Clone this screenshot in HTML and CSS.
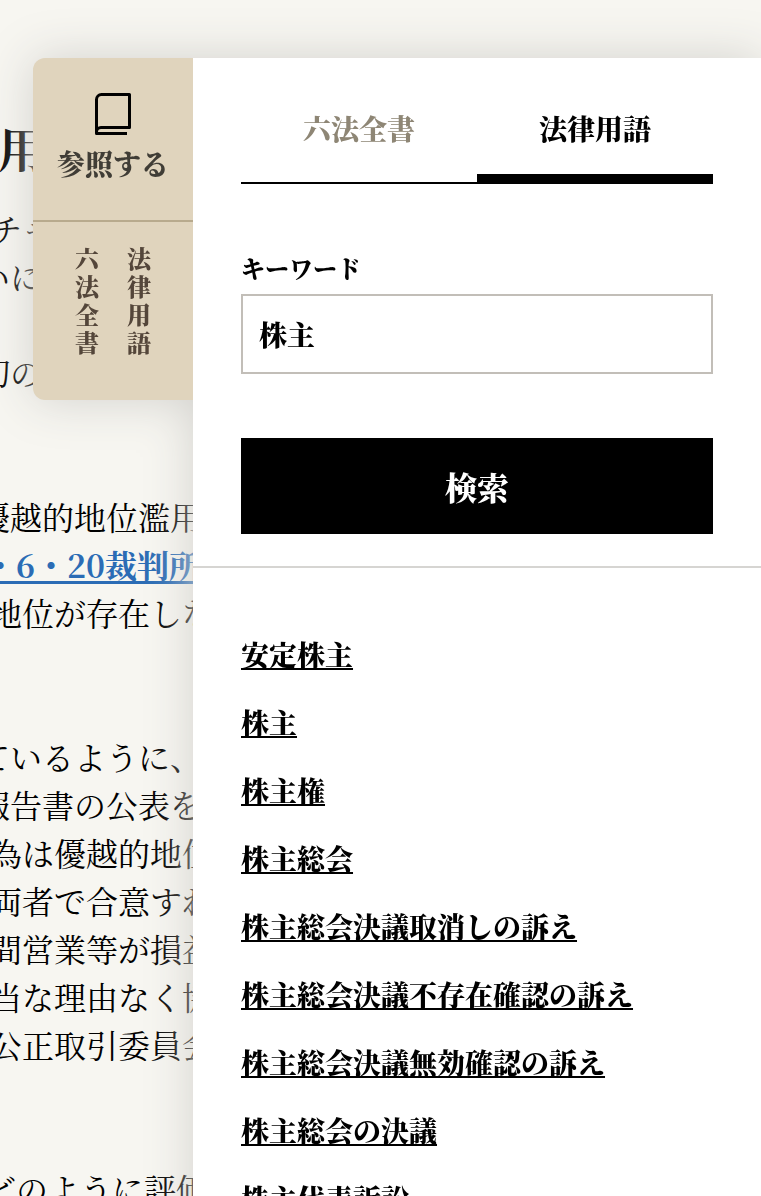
FILE: index.html
```
<!DOCTYPE html>
<html lang="ja">
<head>
  <meta charset="UTF-8">
  <meta name="viewport" content="width=device-width, initial-scale=1.0">
  <title>法律用語</title>
  <link rel="stylesheet" href="styles.css">
</head>
<body>
  <main class="article">
    <h1>用</h1>
    <p>
      <span class="line">チャ</span>
      <span class="line line-wide">いに</span>
    </p>
    <p>
      <span class="line line-wide">切の</span>
    </p>
    <p class="section">
      <span class="line line-wide">優越的地位濫用</span>
      <span class="line line-half"><a href="#case">・6・20裁判所</a></span>
      <span class="line">地位が存在しな</span>
    </p>
    <p class="section">
      <span class="line line-wide">ているように、</span>
      <span class="line line-wide">報告書の公表を</span>
      <span class="line">為は優越的地位</span>
      <span class="line">両者で合意すれ</span>
      <span class="line">間営業等が損益</span>
      <span class="line">当な理由なく協</span>
      <span class="line">公正取引委員会</span>
    </p>
    <p class="section">
      <span class="line line-half">どのように評価</span>
    </p>
  </main>

  <aside class="drawer">
    <div class="handle">
      <button type="button" class="handle-main">
        <svg class="book" viewBox="0 0 36 42" width="36" height="42" fill="none" stroke="#000" stroke-width="3" stroke-linejoin="round" aria-hidden="true">
          <path d="M32 40.500H1.500V6.500a5 5 0 0 1 5-5H34.500V34.500H6a4.500 4.500 0 0 0-4.500 4.500"/>
        </svg>
        <span>参照する</span>
      </button>
      <nav class="handle-links">
        <a href="#roppo">六法全書</a>
        <a href="#terms">法律用語</a>
      </nav>
    </div>

    <div class="panel">
      <div class="panel-top">
        <div class="tabs" role="tablist">
          <button type="button" class="tab" role="tab" aria-selected="false">六法全書</button>
          <button type="button" class="tab active" role="tab" aria-selected="true">法律用語</button>
        </div>
        <form class="search">
          <label for="keyword">キーワード</label>
          <input type="text" id="keyword" value="株主">
          <button type="submit">検索</button>
        </form>
      </div>
      <ul class="results">
        <li><a href="#t1">安定株主</a></li>
        <li><a href="#t2">株主</a></li>
        <li><a href="#t3">株主権</a></li>
        <li><a href="#t4">株主総会</a></li>
        <li><a href="#t5">株主総会決議取消しの訴え</a></li>
        <li><a href="#t6">株主総会決議不存在確認の訴え</a></li>
        <li><a href="#t7">株主総会決議無効確認の訴え</a></li>
        <li><a href="#t8">株主総会の決議</a></li>
        <li><a href="#t9">株主代表訴訟</a></li>
      </ul>
    </div>
  </aside>
</body>
</html>
```
FILE: styles.css
```
* {
  box-sizing: border-box;
}
body {
  margin: 0;
  overflow: hidden;
  background: #f7f6f1;
  color: #000;
  font-family: "Noto Serif CJK JP", "Noto Serif JP", "Noto Sans CJK JP", serif;
}
button, input {
  font: inherit;
  color: inherit;
}

/* article behind the drawer */
.article {
  padding-top: 116px;
  margin-left: -10px;
  font-size: 32px;
  line-height: 48px;
  white-space: nowrap;
}
.article h1 {
  margin: 0 0 24px 8px;
  font-size: 48px;
  font-weight: 700;
  line-height: 64px;
}
.article p {
  margin: 0 0 48px;
}
.article .section {
  margin: 96px 0 0;
}
.line {
  display: block;
}
.line-wide {
  margin-left: -12px;
}
.line-half {
  margin-left: -6px;
}
.article a {
  color: #2b6cb5;
  font-weight: 700;
  text-decoration-thickness: 3px;
  text-underline-offset: 3px;
}

/* drawer, runs past the bottom so its shadow does not fade there */
.drawer {
  position: fixed;
  top: 58px;
  right: 0;
  bottom: -96px;
  left: 33px;
  display: flex;
  align-items: flex-start;
  filter: drop-shadow(0 0 24px #d2d1cd);
}
.handle {
  flex: 0 0 160px;
  background: #e0d4bd;
  border-radius: 12px 0 0 12px;
}
.handle-main {
  display: flex;
  flex-direction: column;
  align-items: center;
  gap: 6px;
  width: 100%;
  padding: 35px 0;
  border: 0;
  border-bottom: 2px solid #b8aa8d;
  background: none;
  color: #403d36;
  font-size: 28px;
  font-weight: 900;
  line-height: 44px;
  cursor: pointer;
}
.book {
  display: block;
}
.handle-links {
  display: flex;
  justify-content: center;
  gap: 28px;
  padding: 22px 0 44px;
}
.handle-links a {
  width: 24px;
  color: #54463a;
  font-size: 24px;
  font-weight: 900;
  line-height: 28px;
  text-decoration: none;
  word-break: break-all;
}
.panel {
  flex: 1;
  align-self: stretch;
  min-width: 0;
  background: #fff;
  overflow: hidden;
}
.panel-top {
  padding: 48px 48px 32px;
  border-bottom: 2px solid #d6d5d2;
}
.tabs {
  display: grid;
  grid-template-columns: 1fr 1fr;
}
.tab {
  padding: 0 0 32px;
  border: 0;
  border-bottom: 2px solid #000;
  background: none;
  color: #8e8675;
  font-size: 28px;
  font-weight: 900;
  line-height: 44px;
  cursor: pointer;
}
.tab.active {
  padding-bottom: 24px;
  border-bottom-width: 10px;
  color: #000;
}
.search {
  display: flex;
  flex-direction: column;
  margin-top: 64px;
}
.search label {
  margin-bottom: 6px;
  font-size: 24px;
  font-weight: 900;
  line-height: 40px;
}
.search input {
  height: 80px;
  padding: 0 16px;
  border: 2px solid #c2beb8;
  border-radius: 0;
  background: #fff;
  font-size: 28px;
  font-weight: 900;
}
.search button {
  height: 96px;
  margin-top: 64px;
  border: 0;
  background: #000;
  color: #fff;
  font-size: 32px;
  font-weight: 900;
  cursor: pointer;
}
.results {
  display: flex;
  flex-direction: column;
  gap: 24px;
  margin: 0;
  padding: 64px 48px;
  list-style: none;
  font-size: 28px;
  font-weight: 900;
  line-height: 44px;
}
.results a {
  color: #000;
  text-decoration-thickness: 2px;
  text-underline-offset: 2px;
}
```
